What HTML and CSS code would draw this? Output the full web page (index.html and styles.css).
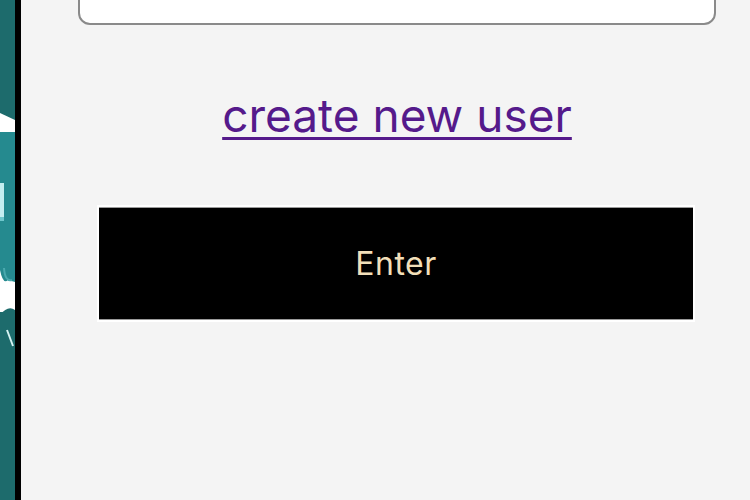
FILE: index.html
```html
<!DOCTYPE html>
<html lang="en">
<head>
    <meta charset="UTF-8">
    <meta name="viewport" content="width=device-width, initial-scale=1.0">
    <title>Login</title>
    <link rel="stylesheet" href="styles.css">
</head>
<body>
    <div class="page">
        <div class="side-art">
            <svg width="15" height="500" viewBox="0 0 15 500" preserveAspectRatio="none">
                <rect x="0" y="0" width="15" height="500" fill="#1d6b6c"/>
                <rect x="0" y="125" width="15" height="175" fill="#258a8f"/>
                <polygon points="0,113 15,120 15,132 0,132" fill="#ffffff"/>
                <rect x="0" y="183" width="4" height="34" fill="#c4eef0"/>
                <rect x="0" y="217" width="4" height="4" fill="#6fc7cc"/>
                <path d="M0,270 Q3,285 8,280 L15,282 L15,310 Q8,305 0,315 Z" fill="#ffffff"/>
                <path d="M4,268 Q5,282 12,280" stroke="#4aa9ae" stroke-width="2" fill="none"/>
                <rect x="0" y="312" width="15" height="188" fill="#1d6b6c"/>
                <line x1="7" y1="330" x2="13" y2="346" stroke="#d6f3f3" stroke-width="2"/>
            </svg>
        </div>
        <div class="divider"></div>
        <main class="main">
            <form class="login-form" onsubmit="return false;">
                <input class="text-field" type="text" aria-label="username">
                <div class="link-row">
                    <a class="new-user" href="#">create new user</a>
                </div>
                <button class="enter-btn" type="submit">Enter</button>
            </form>
        </main>
    </div>
</body>
</html>
```

FILE: styles.css
```css
html, body {
    margin: 0;
    padding: 0;
    height: 100%;
    overflow: hidden;
}

body {
    font-family: Inter, 'Noto Sans', sans-serif;
    background-color: #f4f4f4;
}

.page {
    display: flex;
    height: 500px;
}

.side-art {
    width: 15px;
    flex-shrink: 0;
}

.side-art svg {
    display: block;
}

.divider {
    width: 6px;
    flex-shrink: 0;
    background-color: #000;
}

.main {
    flex: 1;
    padding: 0 34px 0 57px;
}

.login-form {
    display: flex;
    flex-direction: column;
    width: 638px;
    margin-top: -46px;
}

.text-field {
    box-sizing: border-box;
    height: 71px;
    border: 2px solid #8a8a8a;
    border-radius: 12px;
    background: #fff;
    outline: none;
}

.link-row {
    text-align: center;
    margin-top: 62px;
}

.new-user {
    color: #551a8b;
    font-size: 46px;
    text-decoration-thickness: 3px;
    text-underline-offset: 5px;
}

.enter-btn {
    box-sizing: border-box;
    margin: 62px 21px 0 19px;
    height: 117px;
    background: #000;
    color: #f2dfb9;
    font-family: Inter, 'Noto Sans', sans-serif;
    font-size: 32px;
    letter-spacing: 0.5px;
    border: 2px solid #fff;
    box-shadow: inset 0 1px 0 #9a9a9a, inset 0 -1px 0 #9a9a9a;
    cursor: pointer;
}
```
